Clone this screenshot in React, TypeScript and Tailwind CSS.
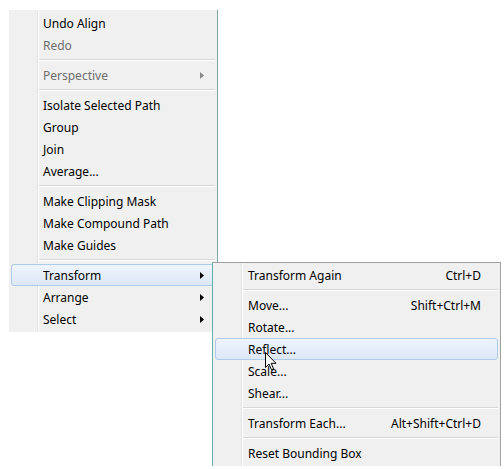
import React from 'react';

type Item =
  | { type: 'sep' }
  | { type: 'item'; label: string; disabled?: boolean; sub?: boolean; shortcut?: string; active?: boolean };

const mainItems: Item[] = [
  { type: 'item', label: 'Undo Align' },
  { type: 'item', label: 'Redo', disabled: true },
  { type: 'sep' },
  { type: 'item', label: 'Perspective', disabled: true, sub: true },
  { type: 'sep' },
  { type: 'item', label: 'Isolate Selected Path' },
  { type: 'item', label: 'Group' },
  { type: 'item', label: 'Join' },
  { type: 'item', label: 'Average...' },
  { type: 'sep' },
  { type: 'item', label: 'Make Clipping Mask' },
  { type: 'item', label: 'Make Compound Path' },
  { type: 'item', label: 'Make Guides' },
  { type: 'sep' },
  { type: 'item', label: 'Transform', sub: true, active: true },
  { type: 'item', label: 'Arrange', sub: true },
  { type: 'item', label: 'Select', sub: true },
];

const subItems: Item[] = [
  { type: 'item', label: 'Transform Again', shortcut: 'Ctrl+D' },
  { type: 'sep' },
  { type: 'item', label: 'Move...', shortcut: 'Shift+Ctrl+M' },
  { type: 'item', label: 'Rotate...' },
  { type: 'item', label: 'Reflect...', active: true },
  { type: 'item', label: 'Scale...' },
  { type: 'item', label: 'Shear...' },
  { type: 'sep' },
  { type: 'item', label: 'Transform Each...', shortcut: 'Alt+Shift+Ctrl+D' },
  { type: 'sep' },
  { type: 'item', label: 'Reset Bounding Box' },
];

function Arrow({ disabled }: { disabled?: boolean }) {
  return (
    <svg width="4" height="7" viewBox="0 0 4 7" className="shrink-0">
      <path d="M0 0 L4 3.5 L0 7 Z" fill={disabled ? '#8a8a8a' : '#000'} />
    </svg>
  );
}

function Menu({ items, textPad, arrowPad, pad }: { items: Item[]; textPad: string; arrowPad: string; pad: string }) {
  return (
    <div className={`relative ${pad}`}>
      <div className="absolute left-[28px] top-0 bottom-0 w-[2px] border-l border-[#e2e3e3] bg-white" />
      {items.map((it, i) =>
        it.type === 'sep' ? (
          <div key={i} className="h-[8px] flex items-center pl-[28px] pr-[2px]">
            <div className="w-full h-[2px] border-t border-[#d7d7d7] bg-white" />
          </div>
        ) : (
          <div
            key={i}
            className={`relative h-[22px] flex items-center mx-[2px] ${it.active ? 'rounded-[3px] border border-[#aecbeb] bg-gradient-to-b from-[#eef4fc] to-[#dde8f6]' : 'border border-transparent'}`}
          >
            <span className={`${textPad} pt-[2px] flex-1 ${it.disabled ? 'text-[#6d6d6d]' : 'text-black'}`}>{it.label}</span>
            {it.shortcut && <span className="pt-[2px] text-black">{it.shortcut}</span>}
            {it.sub && <Arrow disabled={it.disabled} />}
            <span className={arrowPad} />
          </div>
        )
      )}
    </div>
  );
}

export default function App() {
  return (
    <div
      className="relative w-[504px] h-[469px] bg-white overflow-hidden text-[12px] leading-none"
      style={{ fontFamily: '"Noto Sans", "DejaVu Sans", sans-serif' }}
    >
      <div className="absolute left-[9px] top-[10px] w-[209px] bg-[#f0f0f0] border-r border-[#7fa6a3]">
        <Menu items={mainItems} textPad="pl-[31px]" arrowPad="w-[10px]" pad="py-[2px]" />
      </div>

      <div className="absolute left-[212px] top-[262px] w-[289px] h-[204px] bg-[#f0f0f0] border-l border-[#5fb0aa] border-t border-t-[#a0a0a0] border-r border-r-[#a0a0a0]">
        <Menu items={subItems} textPad="pl-[32px]" arrowPad="w-[16px]" pad="pt-[1px] pb-[2px]" />
      </div>

      <svg className="absolute left-[265px] top-[352px]" width="12" height="19" viewBox="0 0 12 19">
        <path d="M0.5 0.5 L0.5 15.5 L4 12 L6.5 17.8 L8.6 16.9 L6.2 11.3 L11 11.3 Z" fill="#fff" stroke="#000" strokeWidth="1" strokeLinejoin="miter" />
      </svg>
    </div>
  );
}
